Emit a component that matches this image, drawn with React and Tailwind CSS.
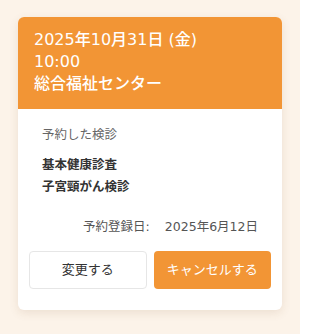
export default function App() {
  return (
    <div
      className="min-h-[334px] w-[300px] bg-[#fcf3e9] px-[18px] pt-[17px]"
      style={{ fontFamily: '"DejaVu Sans", "Noto Sans CJK JP", sans-serif' }}
    >
      <div className="overflow-hidden rounded-md bg-white shadow-[0_3px_10px_rgba(120,80,40,0.12)]">
        {/* header */}
        <div className="bg-[#f29535] px-4 pt-3 pb-[14px] text-[16px] font-medium leading-[22px] text-white">
          <p>2025年10月31日 (金)</p>
          <p>10:00</p>
          <p>総合福祉センター</p>
        </div>

        {/* body */}
        <div className="px-[11px] pt-4 pb-[21px]">
          <div className="px-[13px]">
            <p className="text-[12.5px] leading-5 text-[#666]">予約した検診</p>
            <div className="mt-[9px] text-[12.5px] font-bold leading-[22px] text-[#333]">
              <p>基本健康診査</p>
              <p>子宮頸がん検診</p>
            </div>
            <div className="mt-[19px] flex justify-end gap-[15px] text-[12.5px] leading-5 text-[#555]">
              <span>予約登録日:</span>
              <span>2025年6月12日</span>
            </div>
          </div>

          <div className="mt-[14px] grid grid-cols-2 gap-[7px]">
            <button className="h-[38px] rounded border border-[#e6e6e6] bg-white text-[13px] text-[#333]">
              変更する
            </button>
            <button className="h-[38px] rounded bg-[#f29535] text-[13px] text-white">
              キャンセルする
            </button>
          </div>
        </div>
      </div>
    </div>
  );
}
